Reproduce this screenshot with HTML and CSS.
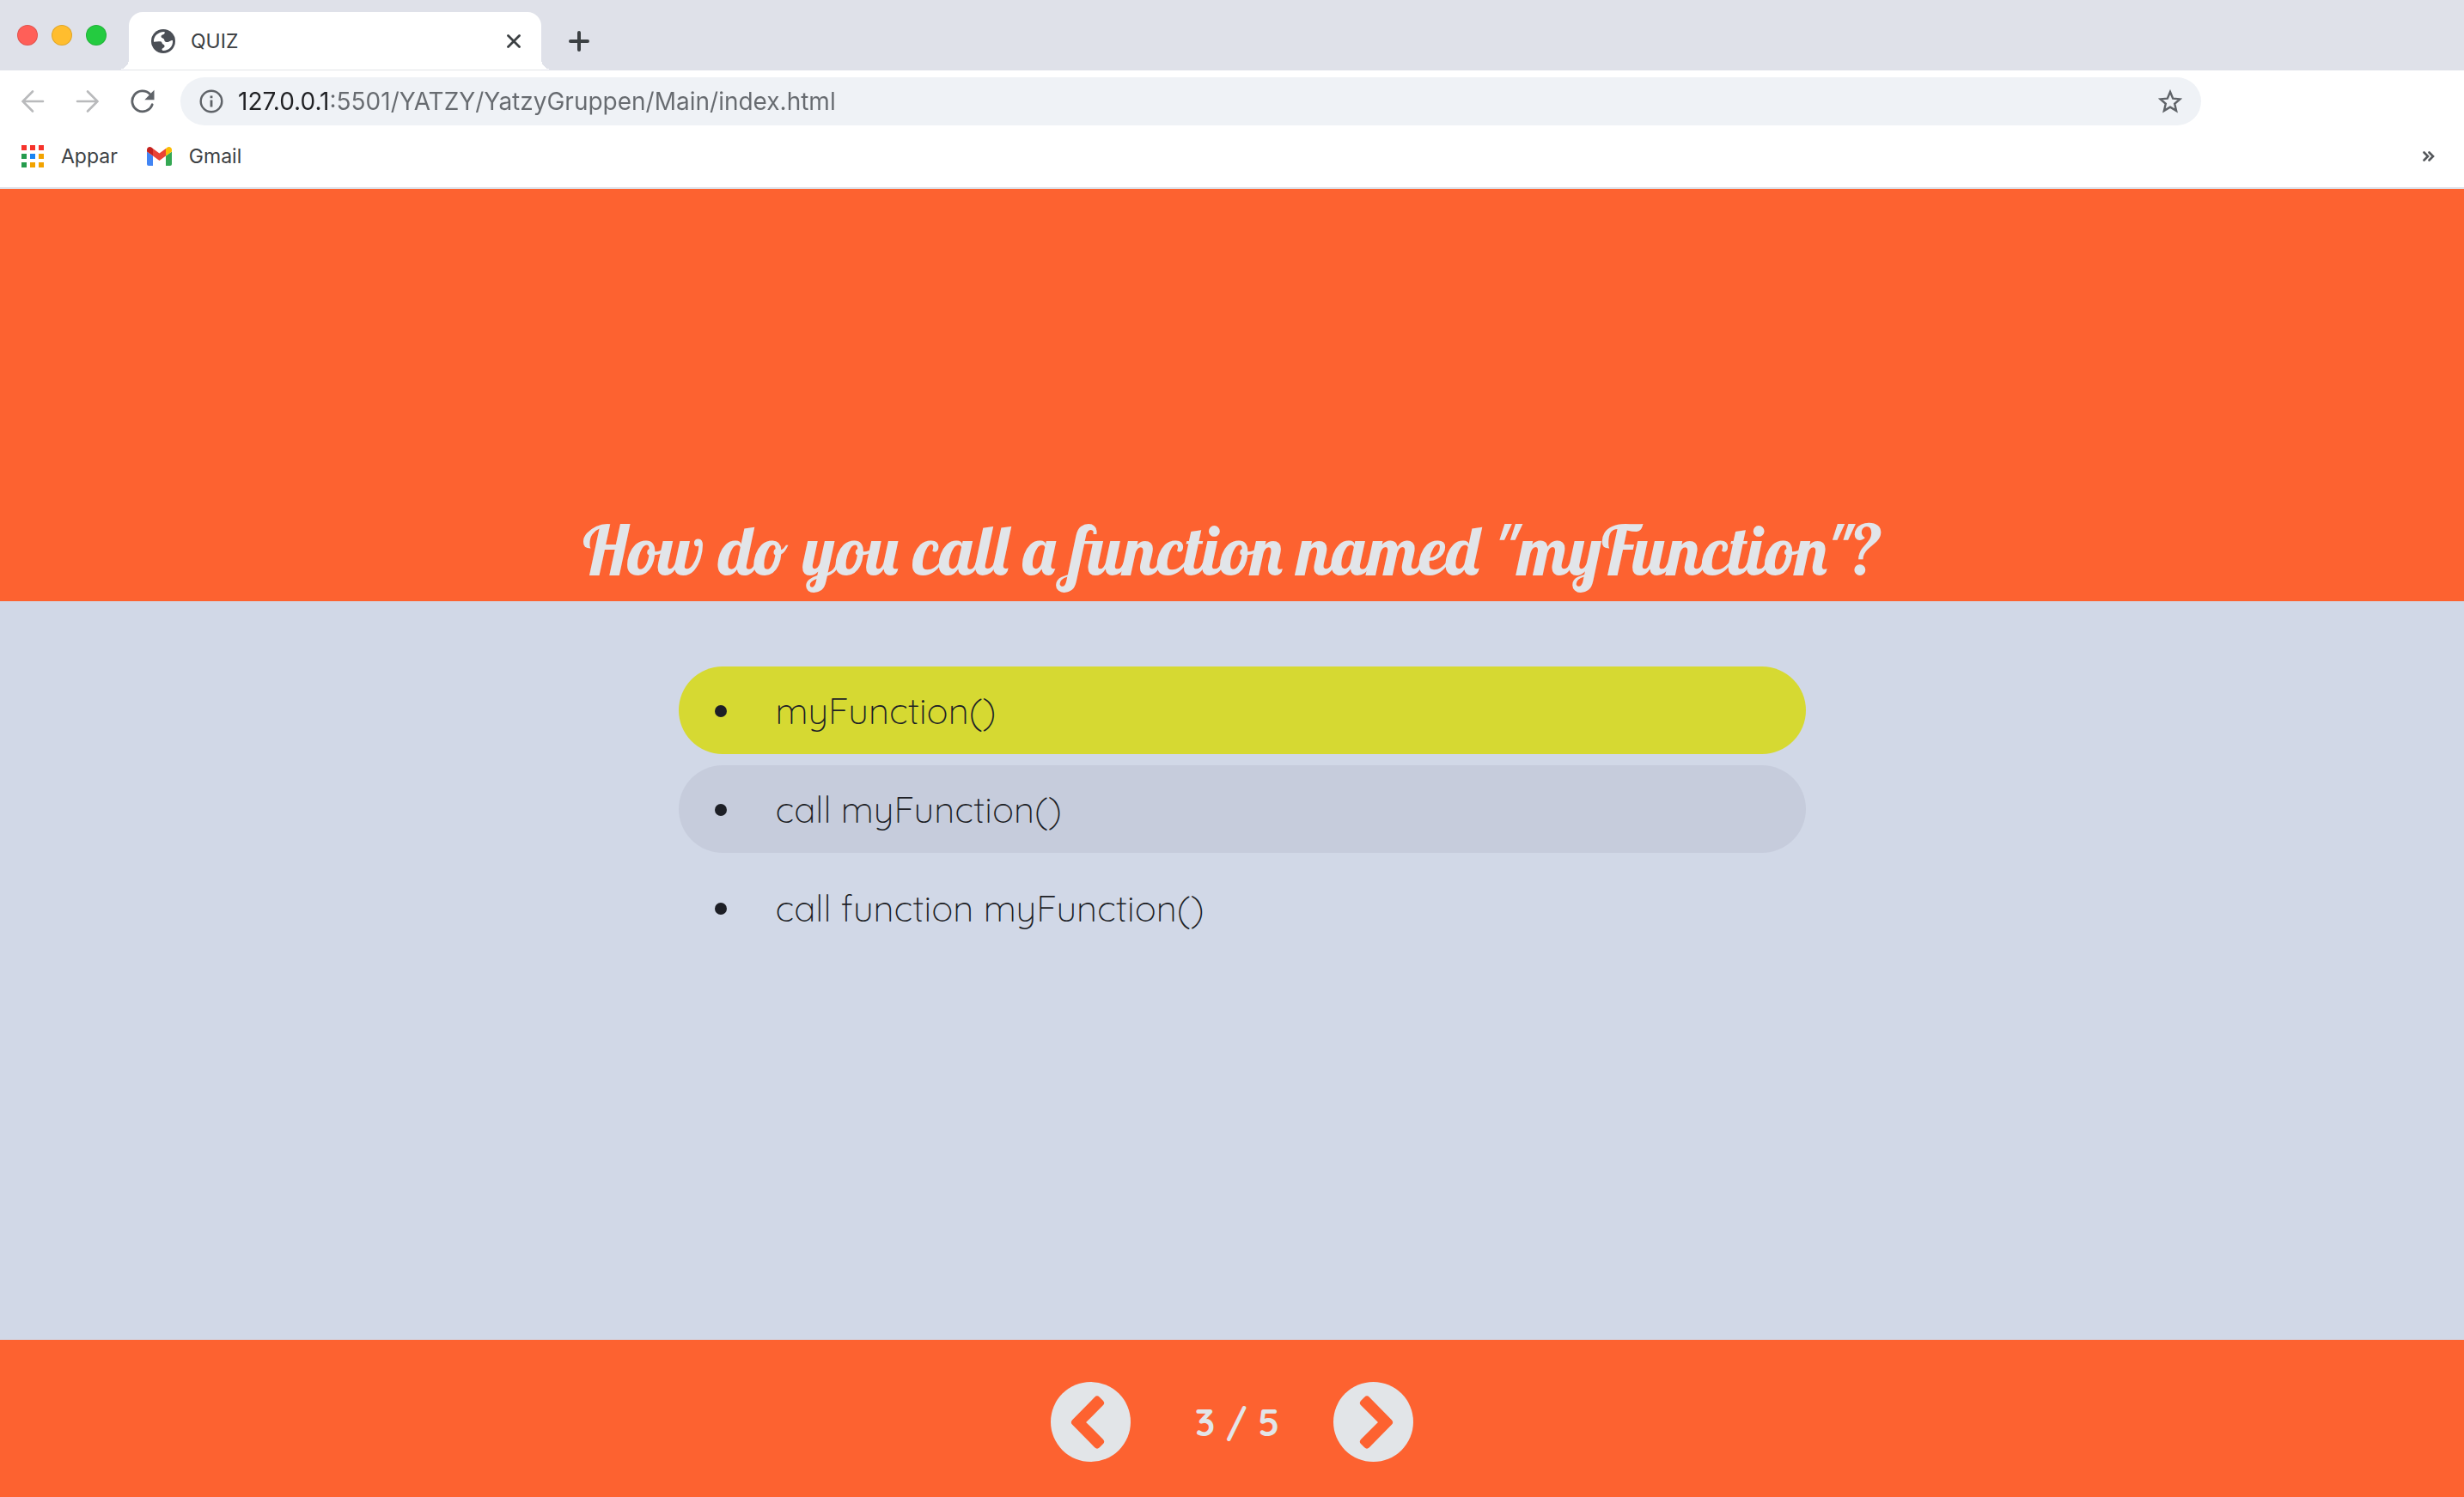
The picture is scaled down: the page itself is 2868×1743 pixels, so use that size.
FILE: index.html
```html
<!DOCTYPE html>
<html lang="en">
<head>
<meta charset="utf-8">
<title>QUIZ</title>
<link rel="stylesheet" href="styles.css">
</head>
<body>
<header class="browser">
  <div class="tab-strip">
    <div class="lights">
      <button class="light light-close" aria-label="Close window"></button>
      <button class="light light-min" aria-label="Minimise window"></button>
      <button class="light light-max" aria-label="Maximise window"></button>
    </div>
    <div class="tab">
      <svg class="icon-28" viewBox="0 0 84 84" aria-hidden="true">
        <circle cx="42" cy="42" r="42" fill="#4b4f56"/>
        <path fill="#fff" d="M9 44C8 25 22 10 46 9c3 3 1 8-5 10-7 2-8 7-4 11 5 2 8 3 9 8 0 5 4 7 10 7 8 0 9-6 19-6 2 20-12 36-34 36-5-2-5-7 0-9 6-2 8-8 3-12-5-2-6-4-7-8-1-3-5-4-11-3z"/>
      </svg>
      <span class="tab-title">QUIZ</span>
      <button class="plain" aria-label="Close tab">
        <svg class="icon-16" viewBox="0 0 16 16" aria-hidden="true"><path d="M1.500 1.500l13 13M14.500 1.500l-13 13" stroke="#3c4043" stroke-width="2.800" stroke-linecap="round"/></svg>
      </button>
    </div>
    <button class="plain new-tab" aria-label="New tab">
      <svg class="icon-24" viewBox="0 0 24 24" aria-hidden="true"><path d="M12 2v20M2 12h20" stroke="#3c4043" stroke-width="4" stroke-linecap="round"/></svg>
    </button>
  </div>

  <div class="toolbar">
    <button class="plain" aria-label="Back">
      <svg class="icon-28" viewBox="0 0 28 28" fill="none" stroke="#b9babc" stroke-width="2.600" stroke-linecap="round" aria-hidden="true"><path d="M26 14H2.500M14 2.500L2.500 14 14 25.500"/></svg>
    </button>
    <button class="plain" aria-label="Forward">
      <svg class="icon-28" viewBox="0 0 28 28" fill="none" stroke="#b9babc" stroke-width="2.600" stroke-linecap="round" aria-hidden="true"><path d="M2 14h23.500M14 2.500L25.500 14 14 25.500"/></svg>
    </button>
    <button class="plain" aria-label="Reload">
      <svg class="icon-28" viewBox="0 0 28 28" aria-hidden="true"><path d="M25.200 17.800A12 12 0 1 1 22.500 5.500" fill="none" stroke="#5f6368" stroke-width="2.800" stroke-linecap="round"/><path d="M27.500.8v11.400H16.300z" fill="#5f6368"/></svg>
    </button>
    <div class="address">
      <svg class="icon-28" viewBox="0 0 28 28" aria-hidden="true"><circle cx="14" cy="14" r="12.300" fill="none" stroke="#5f6368" stroke-width="2.400"/><path d="M12.600 12.500h2.800v8h-2.800zM12.600 7.500h2.800v2.800h-2.800z" fill="#5f6368"/></svg>
      <input class="url" type="text" aria-label="Address" value="127.0.0.1:5501/YATZY/YatzyGruppen/Main/index.html">
      <button class="plain" aria-label="Bookmark this page">
        <svg class="icon-28" viewBox="0 0 28 28" aria-hidden="true"><path d="M14 3l3.200 7.700 8.300.7-6.300 5.400 1.900 8.100L14 20.600l-7.100 4.300 1.900-8.100-6.300-5.400 8.300-.7z" fill="none" stroke="#5f6368" stroke-width="2.400"/></svg>
      </button>
    </div>
  </div>

  <nav class="bookmarks" aria-label="Bookmarks">
    <a class="bookmark" href="#apps">
      <svg class="icon-26" viewBox="0 0 26 26" aria-hidden="true"><path d="M0 0h6v6H0zM10 0h6v6h-6zM20 0h6v6h-6z" fill="#f6332b"/><path d="M0 10h6v6H0zM0 20h6v6H0z" fill="#259b4d"/><path d="M10 10h6v6h-6z" fill="#1a83f2"/><path d="M20 10h6v6h-6zM10 20h6v6h-6zM20 20h6v6h-6z" fill="#f2a300"/></svg>
      <span>Appar</span>
    </a>
    <a class="bookmark" href="#gmail">
      <svg class="mail" viewBox="0 0 29 22" aria-hidden="true"><path d="M2 22h5V10.500L0 5.500V20a2 2 0 0 0 2 2z" fill="#4285f4"/><path d="M22 22h5a2 2 0 0 0 2-2V5.500l-7 5z" fill="#34a853"/><path d="M22 2v8.500l7-5V3.300C29 .5 25.800-1 23.500.8z" fill="#fbbc04"/><path d="M7 10.500V2l7.500 5.500L22 2v8.500L14.500 16z" fill="#ea4335"/><path d="M0 3.300v2.200l7 5V2L5.500.8C3.200-1 0 .5 0 3.300z" fill="#c5221f"/></svg>
      <span>Gmail</span>
    </a>
    <button class="plain more" aria-label="More bookmarks">
      <svg class="chevrons" viewBox="0 0 14 12" aria-hidden="true"><path d="M1.500 1.500L6 6l-4.500 4.500M7.500 1.500L12 6l-4.500 4.500" fill="none" stroke="#55585c" stroke-width="2.600" stroke-linecap="round"/></svg>
    </button>
  </nav>
</header>

<section class="question">
  <h1>How do you call a function named "myFunction"?</h1>
</section>

<main class="quiz">
  <ul class="answers">
    <li class="answer chosen">myFunction()</li>
    <li class="answer hovered">call myFunction()</li>
    <li class="answer">call function myFunction()</li>
  </ul>
</main>

<footer class="pager">
  <button class="round" aria-label="Previous question">
    <svg class="arrow" viewBox="0 0 93 93" fill="#fd6230" stroke="#fd6230" stroke-width="8" stroke-linejoin="round" aria-hidden="true"><path d="M54 20.500l4 4L35.500 47 58 69.500l-4 4L28 47z"/></svg>
  </button>
  <span class="count">3 / 5</span>
  <button class="round" aria-label="Next question">
    <svg class="arrow" viewBox="0 0 93 93" fill="#fd6230" stroke="#fd6230" stroke-width="8" stroke-linejoin="round" aria-hidden="true"><path d="M39 20.500l-4 4L57.500 47 35 69.500l4 4L65 47z"/></svg>
  </button>
</footer>
</body>
</html>
```

FILE: styles.css
```css
* { box-sizing: border-box; }

body {
  margin: 0;
  min-height: 100vh;
  display: flex;
  flex-direction: column;
  background: #d1d8e7;
  font-family: Inter, Roboto, sans-serif;
  color: #3c4043;
}

svg { display: block; flex: none; }
.icon-16 { width: 16px; height: 16px; }
.icon-24 { width: 24px; height: 24px; }
.icon-26 { width: 26px; height: 26px; }
.icon-28 { width: 28px; height: 28px; }

.plain {
  border: 0;
  padding: 0;
  background: none;
}

/* Browser frame */
.browser {
  background: #fff;
  border-bottom: 2px solid #dddfe7;
}

.tab-strip {
  height: 82px;
  display: flex;
  align-items: flex-end;
  background: #dfe1e9;
}

.lights {
  display: flex;
  align-self: center;
  gap: 16px;
  width: 150px;
  padding-left: 20px;
}

.light {
  width: 24px;
  height: 24px;
  padding: 0;
  border: 1px solid rgb(0 0 0 / 12%);
  border-radius: 50%;
}
.light-close { background: #ff5f58; }
.light-min { background: #ffbd2e; }
.light-max { background: #24cb40; }

.tab {
  position: relative;
  width: 480px;
  height: 68px;
  display: flex;
  align-items: center;
  gap: 18px;
  padding: 0 24px 0 26px;
  border-bottom: 1px solid #e3e4e8;
  border-radius: 16px 16px 0 0;
  background: #fff;
}

/* Flared feet at the bottom corners of the active tab */
.tab::before,
.tab::after {
  content: "";
  position: absolute;
  bottom: 0;
  width: 12px;
  height: 12px;
}
.tab::before {
  left: -12px;
  background: radial-gradient(circle at 0 0, #dfe1e9 12px, #fff 12px);
}
.tab::after {
  right: -12px;
  background: radial-gradient(circle at 100% 0, #dfe1e9 12px, #fff 12px);
}

.tab-title {
  flex: 1;
  font-size: 23px;
  line-height: 28px;
}

.new-tab {
  align-self: center;
  padding: 14px 0 0 32px;
}

.toolbar {
  height: 72px;
  display: flex;
  align-items: center;
  gap: 36px;
  padding: 0 24px;
}

.address {
  flex: 1;
  height: 56px;
  display: flex;
  align-items: center;
  gap: 17px;
  margin-left: -6px;
  margin-right: 282px;
  padding: 0 22px;
  border-radius: 28px;
  background: #eff2f6;
}

/* The host part of the address is darker than its path */
.url {
  flex: 1;
  min-width: 0;
  height: 40px;
  border: 0;
  padding: 0;
  outline: 0;
  background: linear-gradient(90deg, #202124 107px, #676b70 107px);
  background-clip: text;
  color: transparent;
  font: 28px/40px Inter, Roboto, sans-serif;
}

.bookmarks {
  height: 64px;
  display: flex;
  align-items: center;
  gap: 34px;
  padding: 0 34px 8px 25px;
}

.bookmark {
  display: flex;
  align-items: center;
  gap: 20px;
  color: inherit;
  font-size: 23px;
  line-height: 32px;
  text-decoration: none;
}

.mail { width: 29px; height: 22px; }
.chevrons { width: 14px; height: 12px; }
.more { margin-left: auto; }

/* Quiz */
.question {
  min-height: 480px;
  display: flex;
  align-items: flex-end;
  justify-content: center;
  padding-bottom: 12px;
  background: #fd6230;
}

.question h1 {
  margin: 0;
  font: 500 80px/96px Lobster, "Liberation Serif", serif;
  color: #e2e5e9;
  text-align: center;
}

.quiz {
  flex: 1;
  padding: 76px 0 76px 23px;
}

.answers {
  max-width: 1312px;
  margin: 0 auto;
  padding: 0;
  display: grid;
  gap: 13px;
  list-style: none;
}

.answer {
  display: flex;
  align-items: center;
  gap: 57px;
  min-height: 102px;
  padding: 2px 42px 0;
  border-radius: 51px;
  font: 300 42px/56px Quicksand, Lato, sans-serif;
  color: #1d1f26;
}

.answer::before {
  content: "";
  flex: none;
  width: 14px;
  height: 14px;
  border-radius: 50%;
  background: #1d1f26;
}

.chosen { background: #d6d932; }
.hovered { background: #c6ccdc; }

.pager {
  min-height: 183px;
  display: flex;
  align-items: center;
  justify-content: center;
  padding-top: 8px;
  background: #fd6230;
}

.round {
  width: 93px;
  height: 93px;
  padding: 0;
  border: 0;
  border-radius: 50%;
  background: #e2e5e8;
}

.arrow { width: 93px; height: 93px; }

.count {
  width: 236px;
  padding-left: 12px;
  font: 700 44px/56px Quicksand, Lato, sans-serif;
  color: #e2e5e8;
  text-align: center;
}
```
